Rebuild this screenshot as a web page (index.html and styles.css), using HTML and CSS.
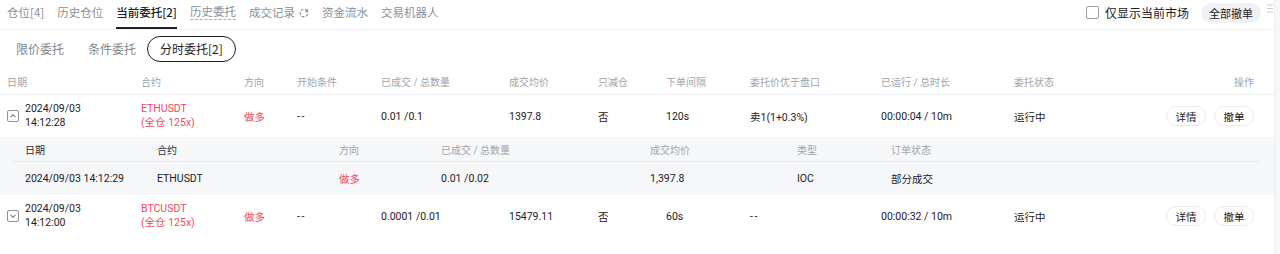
FILE: index.html
```html
<!DOCTYPE html>
<html lang="zh-CN">
<head>
<meta charset="utf-8">
<title>当前委托</title>
<link rel="stylesheet" href="styles.css">
</head>
<body>
<div class="panel">
  <div class="topbar">
    <nav class="tabs">
      <span class="tab">仓位[4]</span>
      <span class="tab">历史仓位</span>
      <span class="tab active">当前委托[2]</span>
      <span class="tab"><span class="dashed">历史委托</span></span>
      <span class="tab">成交记录 <svg class="refresh" width="10" height="10" viewBox="0 0 10 10"><path d="M8.3 3.2 A3.8 3.8 0 1 0 8.6 6.2" fill="none" stroke="#8c9099" stroke-width="1.1" stroke-dasharray="3 1.3"/><path d="M8.6 1.2 L8.6 3.6 L6.3 3.6" fill="none" stroke="#8c9099" stroke-width="1.1"/></svg></span>
      <span class="tab">资金流水</span>
      <span class="tab">交易机器人</span>
    </nav>
    <div class="tools">
      <label class="check"><span class="box"></span>仅显示当前市场</label>
      <button class="btn-all">全部撤单</button>
      <svg class="menu" width="6" height="9" viewBox="0 0 6 9"><path d="M0 1h6M0 4.5h6M0 8h6" stroke="#c8ccd2" stroke-width="1"/></svg>
    </div>
  </div>

  <div class="subtabs">
    <span class="subtab">限价委托</span>
    <span class="subtab">条件委托</span>
    <span class="subtab on">分时委托[2]</span>
  </div>

  <div class="table">
    <div class="thead cols">
      <span>日期</span><span>合约</span><span>方向</span><span>开始条件</span><span>已成交 / 总数量</span><span>成交均价</span><span>只减仓</span><span>下单间隔</span><span>委托价优于盘口</span><span>已运行 / 总时长</span><span>委托状态</span><span class="end">操作</span>
    </div>

    <div class="row cols">
      <div class="date-cell">
        <span class="toggle"><svg width="8" height="8" viewBox="0 0 8 8"><path d="M1.5 5.2 L4 2.8 L6.5 5.2" fill="none" stroke="#7d828b" stroke-width="1.1"/></svg></span>
        <span class="two">2024/09/03<br>14:12:28</span>
      </div>
      <span class="two red">ETHUSDT<br>(全仓 125x)</span>
      <span class="red">做多</span>
      <span class="dash">--</span>
      <span>0.01 /0.1</span>
      <span>1397.8</span>
      <span>否</span>
      <span>120s</span>
      <span>卖1(1+0.3%)</span>
      <span>00:00:04 / 10m</span>
      <span>运行中</span>
      <div class="ops"><button class="btn">详情</button><button class="btn">撤单</button></div>
    </div>

    <div class="sub">
      <div class="sub-head subcols">
        <span class="dark">日期</span><span class="dark">合约</span><span>方向</span><span>已成交 / 总数量</span><span>成交均价</span><span>类型</span><span>订单状态</span>
      </div>
      <div class="sub-row subcols">
        <span>2024/09/03 14:12:29</span><span>ETHUSDT</span><span class="red">做多</span><span>0.01 /0.02</span><span>1,397.8</span><span>IOC</span><span>部分成交</span>
      </div>
    </div>

    <div class="row cols">
      <div class="date-cell">
        <span class="toggle"><svg width="8" height="8" viewBox="0 0 8 8"><path d="M1.5 2.8 L4 5.2 L6.5 2.8" fill="none" stroke="#7d828b" stroke-width="1.1"/></svg></span>
        <span class="two">2024/09/03<br>14:12:00</span>
      </div>
      <span class="two red">BTCUSDT<br>(全仓 125x)</span>
      <span class="red">做多</span>
      <span class="dash">--</span>
      <span>0.0001 /0.01</span>
      <span>15479.11</span>
      <span>否</span>
      <span>60s</span>
      <span class="dash">--</span>
      <span>00:00:32 / 10m</span>
      <span>运行中</span>
      <div class="ops"><button class="btn">详情</button><button class="btn">撤单</button></div>
    </div>
  </div>
</div>
</body>
</html>
```

FILE: styles.css
```css
* { box-sizing: border-box; }
html, body { margin: 0; padding: 0; }
body {
  background: #f6f7f9;
  font-family: Roboto, "Noto Sans CJK SC", sans-serif;
  color: #1e2026;
  width: 1280px;
  height: 254px;
  overflow: hidden;
}
.panel {
  width: 1275px;
  min-height: 254px;
  background: #fff;
  border-right: 1px solid #eceef1;
}

/* top tabs */
.topbar {
  display: flex;
  justify-content: space-between;
  align-items: flex-start;
  height: 30px;
  border-bottom: 1px solid #eef0f3;
}
.tabs {
  display: flex;
  gap: 13px;
  padding-left: 7px;
  height: 29px;
}
.tab {
  font-family: "Noto Sans CJK SC", Roboto, sans-serif;
  font-size: 11.5px;
  line-height: 17px;
  padding-top: 4px;
  color: #8a8f98;
  height: 29px;
  border-bottom: 2px solid transparent;
  display: flex;
  align-items: flex-start;
  white-space: nowrap;
}
.tab.active {
  color: #1e2026;
  font-weight: 500;
  border-bottom-color: #1e2026;
}
.dashed {
  border-bottom: 1px dashed #a9adb4;
  line-height: 15px;
}
.refresh { margin: 4px 0 0 4px; }

.tools {
  display: flex;
  align-items: center;
  height: 25px;
}
.check {
  display: flex;
  align-items: center;
  gap: 6px;
  font-family: "Noto Sans CJK SC", sans-serif;
  font-size: 12px;
  color: #1e2026;
}
.box {
  width: 13px;
  height: 13px;
  border: 1px solid #9a9ea6;
  border-radius: 2px;
  background: #fff;
}
.btn-all {
  margin-left: 12px;
  height: 20px;
  padding: 0 8px;
  border: none;
  border-radius: 10px;
  background: #f0f1f4;
  font-family: "Noto Sans CJK SC", sans-serif;
  font-size: 11px;
  color: #1e2026;
}
.menu { margin: 0 1px 8px 6px; }

/* sub tabs */
.subtabs {
  display: flex;
  padding: 6px 0 0 4px;
  margin-bottom: 6px;
}
.subtab {
  font-family: "Noto Sans CJK SC", sans-serif;
  font-size: 12px;
  height: 26px;
  line-height: 24px;
  padding: 0 11px;
  border: 1px solid transparent;
  border-radius: 13px;
  color: #80858e;
}
.subtab.on {
  border-color: #1e2026;
  color: #1e2026;
  padding: 0 12px;
  margin-left: -1px;
}

/* table */
.cols {
  display: grid;
  grid-template-columns: 134px 103px 53px 84px 128px 89px 68px 84px 131px 133px 1fr 120px;
  padding: 0 20px 0 7px;
  align-items: center;
}
.thead {
  height: 27px;
  border-bottom: 1px solid #eef0f3;
  font-size: 10px;
  color: #a0a5ad;
}
.thead .end { text-align: right; }
.row {
  height: 42px;
  font-size: 10.5px;
  color: #1e2026;
  background: #fff;
}
.dash { letter-spacing: 1.5px; }
.date-cell {
  display: flex;
  align-items: center;
  gap: 6px;
}
.two { line-height: 14px; }
.toggle {
  width: 12px;
  height: 12px;
  border: 1px solid #8d9199;
  border-radius: 2px;
  display: flex;
  align-items: center;
  justify-content: center;
}
.red { color: #ef4a5e; }
.ops {
  display: flex;
  justify-content: flex-end;
  gap: 8px;
}
.btn {
  width: 40px;
  height: 20px;
  border: 1px solid #e7e9ec;
  border-radius: 10px;
  background: #fff;
  font-family: "Noto Sans CJK SC", sans-serif;
  font-size: 10.5px;
  color: #1e2026;
  padding: 0;
}

/* expanded sub table */
.sub {
  background: #f6f7f9;
  height: 58px;
  padding: 0 13px 0 12px;
}
.subcols {
  display: grid;
  grid-template-columns: 132px 182px 102px 209px 147px 94px 1fr;
  padding-left: 13px;
  align-items: center;
}
.sub-head {
  height: 25px;
  border-bottom: 1px solid #e9ebee;
  font-size: 10px;
  color: #a0a5ad;
}
.sub-head .dark { color: #2a2d33; }
.sub-row {
  height: 33px;
  font-size: 10.5px;
  color: #1e2026;
}
```
